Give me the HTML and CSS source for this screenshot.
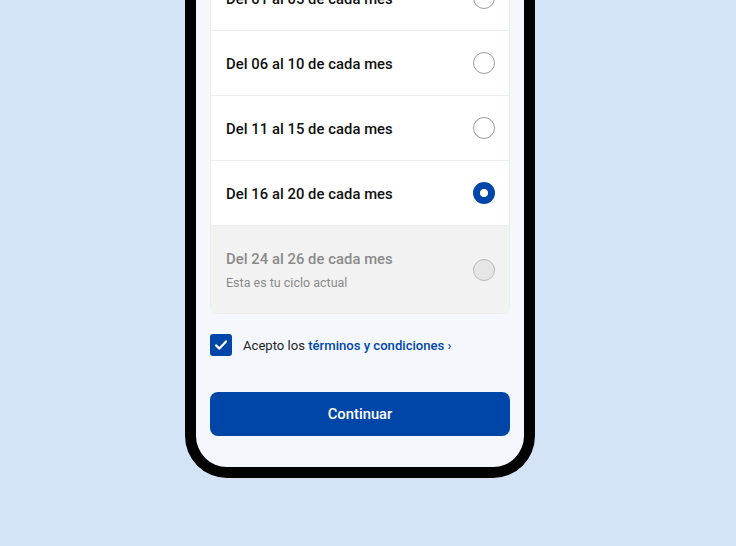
FILE: index.html
```html
<!DOCTYPE html>
<html lang="es">
<head>
<meta charset="utf-8">
<link rel="stylesheet" href="styles.css">
</head>
<body>
<div class="stage">
  <div class="phone">
    <div class="screen">
      <div class="list">
        <div class="row">
          <span class="label">Del 01 al 05 de cada mes</span>
          <span class="radio"></span>
        </div>
        <div class="row">
          <span class="label">Del 06 al 10 de cada mes</span>
          <span class="radio"></span>
        </div>
        <div class="row">
          <span class="label">Del 11 al 15 de cada mes</span>
          <span class="radio"></span>
        </div>
        <div class="row">
          <span class="label">Del 16 al 20 de cada mes</span>
          <span class="radio selected"></span>
        </div>
        <div class="row disabled">
          <div class="texts">
            <span class="label">Del 24 al 26 de cada mes</span>
            <span class="sub">Esta es tu ciclo actual</span>
          </div>
          <span class="radio"></span>
        </div>
      </div>
      <div class="terms">
        <span class="check">
          <svg width="16" height="16" viewBox="0 0 16 16"><path d="M3 8.4 L6.4 11.6 L13 4.4" fill="none" stroke="#fff" stroke-width="2.2" stroke-linecap="round" stroke-linejoin="round"/></svg>
        </span>
        <span class="terms-text">Acepto los <a class="link">términos y condiciones ›</a></span>
      </div>
      <button class="cta">Continuar</button>
    </div>
  </div>
</div>
</body>
</html>
```
FILE: styles.css
```css
html, body {
  margin: 0;
  padding: 0;
}
body {
  background: #d4e4f6;
  font-family: Roboto, "Liberation Sans", sans-serif;
  width: 736px;
  height: 546px;
  overflow: hidden;
}
.stage {
  display: flex;
  justify-content: flex-start;
  padding-left: 185px;
}
.phone {
  width: 350px;
  height: 478px;
  box-sizing: border-box;
  background: #000;
  border-radius: 0 0 42px 42px;
  padding: 0 11px 11px 11px;
}
.screen {
  height: 100%;
  background: #f4f8fd;
  border-radius: 0 0 31px 31px;
  padding: 0 14px;
  box-sizing: border-box;
  display: flex;
  flex-direction: column;
  overflow: hidden;
}
.list {
  margin-top: -34px;
  background: #fff;
  border: 1px solid #ebedf0;
  border-top: none;
  border-radius: 0 0 8px 8px;
  overflow: hidden;
}
.row {
  height: 64px;
  display: flex;
  align-items: center;
  justify-content: space-between;
  padding: 0 14px 0 15px;
  border-bottom: 1px solid #ebedf0;
}
.row:last-child {
  border-bottom: none;
}
.label {
  font-size: 14.8px;
  font-weight: 500;
  color: #111;
  letter-spacing: 0.05px;
  padding-top: 1px;
}
.radio {
  width: 20px;
  height: 20px;
  border-radius: 50%;
  border: 1px solid #9a9a9a;
  box-sizing: content-box;
  background: #fff;
}
.radio.selected {
  width: 8px;
  height: 8px;
  border: 7px solid #0046a8;
  background: #fff;
}
.row.disabled {
  height: 87px;
  background: #f2f2f2;
}
.row.disabled .label {
  color: #8a8a8a;
}
.row.disabled .radio {
  background: #e6e6e6;
  border-color: #b9b9b9;
}
.texts {
  display: flex;
  flex-direction: column;
  gap: 7px;
  margin-top: -1px;
}
.sub {
  font-size: 12.5px;
  color: #8a8a8a;
}
.terms {
  display: flex;
  align-items: center;
  gap: 11px;
  margin-top: 20px;
}
.check {
  width: 22px;
  height: 22px;
  border-radius: 3px;
  background: #0046a8;
  display: flex;
  align-items: center;
  justify-content: center;
}
.terms-text {
  font-size: 13.1px;
  color: #222;
}
.link {
  color: #0046a8;
  font-weight: 500;
}
.cta {
  margin-top: 36px;
  height: 44px;
  border: none;
  border-radius: 8px;
  background: #0046a8;
  color: #fff;
  font-family: Roboto, "Liberation Sans", sans-serif;
  font-size: 14.8px;
  font-weight: 500;
  width: 100%;
}
```
